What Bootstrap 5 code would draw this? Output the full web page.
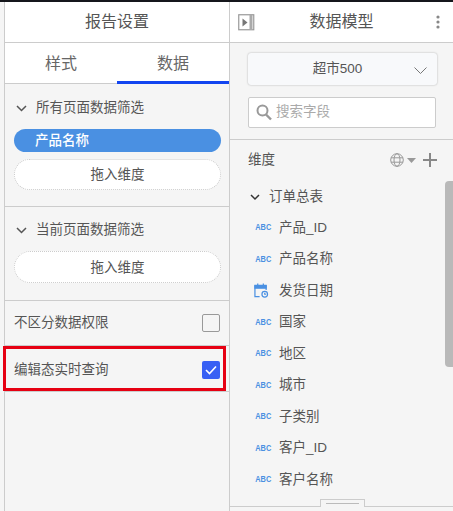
<!DOCTYPE html>
<html lang="zh">

<head>
  <meta charset="UTF-8">
  <title>报告设置</title>
  <link href="https://cdn.jsdelivr.net/npm/bootstrap@5.3.3/dist/css/bootstrap.min.css" rel="stylesheet">
  <style>
    html, body {
      height: 100%;
      overflow: hidden;
    }
    body {
      font-family: "Liberation Sans", "Noto Sans CJK SC", sans-serif;
      font-size: 13.5px;
      color: #555;
      background: #f5f5f5;
      padding-left: 4px;
      border-top: 2px solid #15171c;
    }
    .shell { height: 509px; }
    .left-pane {
      width: 226px;
      flex: none;
      border-left: 1px solid #ccc;
      border-right: 1px solid #ccc;
      position: relative;
    }
    .right-pane { flex: 1; min-width: 0; position: relative; }
    .head-bar {
      height: 41px;
      background: #fff;
      border-bottom: 1px solid #ccc;
      font-size: 16px;
    }
    .model-head { padding: 0 13px 0 8px; }
    .tab-row { height: 41px; background: #fff; border-bottom: 1px solid #ccc; }
    .tab-item { width: 50%; font-size: 16px; color: #666; padding-top: 9px; text-align: center; }
    .tab-on { border-bottom: 3px solid #1245f0; height: 41px; }
    .sect { border-bottom: 1px solid #ccc; padding: 0 8px 0 9px; }
    .sect-one { height: 123px; padding-top: 15px; }
    .sect-two { height: 94px; padding-top: 14px; }
    .sect-title { height: 18px; padding-left: 2px; gap: 9px; }
    .pill-on {
      height: 23px;
      margin-top: 12px;
      background: #4a90e2;
      color: #fff;
      border-radius: 12px;
      padding: 2px 0 0 21px;
      font-weight: 500;
    }
    .pill-drop {
      height: 31px;
      margin-top: 7px;
      background: #fff;
      border: 1px dotted #ccc;
      border-radius: 16px;
      line-height: 29px;
      text-align: center;
    }
    .drop-big { margin-top: 12px; height: 32px; line-height: 31px; }
    .opt-row { height: 45px; border-bottom: 1px solid #ccc; padding: 0 9px; }
    .opt-row > span:first-child { padding-top: 1px; }
    .opt-framed {
      height: 45px;
      margin-left: -2px;
      width: 223px;
      border: 3px solid #e60012;
      padding: 0 3px 0 8px;
    }
    .opt-framed > span:first-child { padding-top: 3px; }
    .tick-off { width: 18px; height: 18px; border: 1px solid #999; border-radius: 2px; background: #f5f5f5; }
    .tick-on { width: 18px; height: 18px; margin-top: 3px; border-radius: 2px; background: #3860f4; }
    .rule-line { border-bottom: 1px solid #ccc; }
    .model-select {
      margin: 0 16px 0 18px;
      height: 32px;
      background: #f8f9fb;
      border-radius: 3px;
      box-shadow: 0 0 2px rgba(0, 0, 0, .3);
      position: relative;
      text-align: center;
      line-height: 32px;
      padding-right: 10px;
    }
    .model-select svg { position: absolute; right: 10px; top: 14px; }
    .search-box {
      margin: 12px 17px 0 18px;
      height: 31px;
      background: #fff;
      border: 1px solid #ccc;
      border-radius: 2px;
      color: #aaa;
      padding-left: 7px;
      gap: 4px;
    }
    .search-wrap { height: 97px; padding-top: 10px; border-bottom: 1px solid #ccc; }
    .dim-head { height: 38px; padding: 2px 16px 0 18px; }
    .dim-tools { gap: 3px; }
    .plus-mark { margin-left: 4px; }
    .tree-title { height: 26px; padding-left: 20px; gap: 9px; margin-top: 6px; margin-bottom: 2px; }
    .field-row { height: 31.5px; padding-left: 24px; gap: 11px; }
    .abc-tag {
      width: 14px;
      font-size: 9px;
      font-weight: 700;
      color: #4a90e2;
      text-align: center;
      white-space: nowrap;
      display: inline-block;
      transform: scaleX(.82);
    }
    .date-mark { width: 14px; height: 15px; overflow: visible; }
    .scroll-thumb {
      position: absolute;
      right: 0;
      top: 179px;
      width: 8px;
      height: 186px;
      background: #b9b9b9;
      border-radius: 4px 0 0 4px;
    }
    .foot-rule { position: absolute; left: 0; right: 0; top: 504px; border-top: 1px solid #ccc; }
    .drag-grip {
      position: absolute;
      left: 90px;
      top: 497px;
      width: 45px;
      height: 8px;
      border: 1px solid #ccc;
      border-bottom: 0;
      background: #f5f5f5;
    }
    .drag-grip::after {
      content: "";
      position: absolute;
      left: 5px;
      right: 5px;
      top: 3px;
      border-top: 1px solid #bbb;
    }
  </style>
</head>

<body>
  <div class="shell d-flex">
    <div class="left-pane">
      <div class="head-bar d-flex align-items-center justify-content-center">报告设置</div>
      <div class="tab-row d-flex">
        <div class="tab-item">样式</div>
        <div class="tab-item tab-on">数据</div>
      </div>

      <div class="sect sect-one">
        <div class="sect-title d-flex align-items-center">
          <svg width="11" height="7" viewBox="0 0 11 7"><path d="M1 1l4.500 4.500L10 1" fill="none" stroke="#555" stroke-width="1.500"/></svg>
          <span>所有页面数据筛选</span>
        </div>
        <div class="pill-on">产品名称</div>
        <div class="pill-drop">拖入维度</div>
      </div>

      <div class="sect sect-two">
        <div class="sect-title d-flex align-items-center">
          <svg width="11" height="7" viewBox="0 0 11 7"><path d="M1 1l4.500 4.500L10 1" fill="none" stroke="#555" stroke-width="1.500"/></svg>
          <span>当前页面数据筛选</span>
        </div>
        <div class="pill-drop drop-big">拖入维度</div>
      </div>

      <div class="opt-row d-flex align-items-center justify-content-between">
        <span>不区分数据权限</span>
        <span class="tick-off"></span>
      </div>
      <div class="opt-framed d-flex align-items-center justify-content-between">
        <span>编辑态实时查询</span>
        <span class="tick-on d-flex align-items-center justify-content-center">
          <svg width="12" height="10" viewBox="0 0 12 10"><path d="M1 5l3.500 3.500L11 1.500" fill="none" stroke="#fff" stroke-width="1.600"/></svg>
        </span>
      </div>
      <div class="rule-line"></div>
    </div>

    <div class="right-pane">
      <div class="head-bar model-head d-flex align-items-center justify-content-between">
        <svg width="17" height="17" viewBox="0 0 17 17">
          <rect x=".75" y=".75" width="15" height="15" fill="#fff" stroke="#999" stroke-width="1.200"/>
          <path d="M4.500 4.500l5 4-5 4z" fill="#777"/>
          <rect x="11.500" y="1" width="3" height="15" fill="#aaa"/>
        </svg>
        <span class="me-2">数据模型</span>
        <svg width="4" height="14" viewBox="0 0 4 14" fill="#888">
          <circle cx="2" cy="2" r="1.600"/>
          <circle cx="2" cy="7" r="1.600"/>
          <circle cx="2" cy="12" r="1.600"/>
        </svg>
      </div>

      <div class="search-wrap">
        <div class="model-select">超市500
          <svg width="13" height="8" viewBox="0 0 13 8"><path d="M.5.500l6 6 6-6" fill="none" stroke="#777" stroke-width="1"/></svg>
        </div>
        <div class="search-box d-flex align-items-center">
          <svg width="16" height="17" viewBox="0 0 16 17"><circle cx="6.500" cy="6.500" r="5" fill="none" stroke="#999" stroke-width="2"/><path d="M10 10.500l5 5" stroke="#999" stroke-width="2.400"/></svg>
          <span>搜索字段</span>
        </div>
      </div>

      <div class="dim-head d-flex align-items-center justify-content-between">
        <span>维度</span>
        <span class="dim-tools d-flex align-items-center">
          <svg width="14" height="14" viewBox="0 0 14 14" fill="none" stroke="#999">
            <circle cx="7" cy="7" r="6.300"/>
            <ellipse cx="7" cy="7" rx="3" ry="6.300"/>
            <path d="M1 4.800h12M1 9.200h12"/>
          </svg>
          <svg width="9" height="5" viewBox="0 0 9 5"><path d="M0 0h9L4.500 5z" fill="#999"/></svg>
          <svg class="plus-mark" width="14" height="14" viewBox="0 0 14 14"><path d="M7 0v14M0 7h14" stroke="#888" stroke-width="2"/></svg>
        </span>
      </div>

      <div class="tree-title d-flex align-items-center">
        <svg width="10" height="7" viewBox="0 0 10 7"><path d="M1 1l4 4 4-4" fill="none" stroke="#333" stroke-width="1.500"/></svg>
        <span>订单总表</span>
      </div>

      <div id="fields"></div>
      <div class="scroll-thumb"></div>
      <div class="foot-rule"></div>
      <div class="drag-grip"></div>
    </div>
  </div>

  <script>
    // field list for the data model panel
    const fields = ['产品_ID', '产品名称', '发货日期', '国家', '地区', '城市', '子类别', '客户_ID', '客户名称'];
    const calendar = `<svg class="date-mark" viewBox="0 0 15 15" fill="none" stroke="#4a90e2" stroke-width="1.300">
      <path d="M6 14H1V2.500h12V7"/><path d="M1 2h12v3H1z" fill="#4a90e2"/><path d="M4 0v3M10 0v3"/>
      <circle cx="11.500" cy="11.500" r="3"/><path d="M11.500 10v1.500H13"/></svg>`;
    const list = document.getElementById('fields');
    fields.forEach(name => {
      const icon = name === '发货日期' ? calendar : '<span class="abc-tag">ABC</span>';
      list.innerHTML += `<div class="field-row d-flex align-items-center">${icon}<span>${name}</span></div>`;
    });
  </script>

  <script src="https://cdn.jsdelivr.net/npm/bootstrap@5.3.3/dist/js/bootstrap.bundle.min.js"></script>
</body>

</html>
